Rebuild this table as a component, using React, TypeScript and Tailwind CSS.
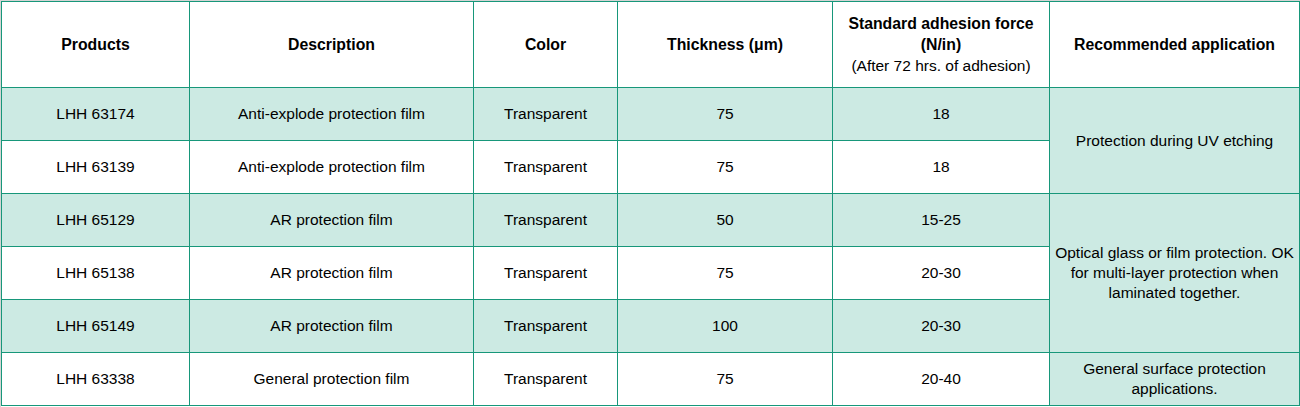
import React from 'react';

interface Row {
    product: string;
    description: string;
    color: string;
    thickness: string;
    adhesion: string;
    shaded: boolean;
}

const rows: Row[] = [
    { product: 'LHH 63174', description: 'Anti-explode protection film', color: 'Transparent', thickness: '75', adhesion: '18', shaded: true },
    { product: 'LHH 63139', description: 'Anti-explode protection film', color: 'Transparent', thickness: '75', adhesion: '18', shaded: false },
    { product: 'LHH 65129', description: 'AR protection film', color: 'Transparent', thickness: '50', adhesion: '15-25', shaded: true },
    { product: 'LHH 65138', description: 'AR protection film', color: 'Transparent', thickness: '75', adhesion: '20-30', shaded: false },
    { product: 'LHH 65149', description: 'AR protection film', color: 'Transparent', thickness: '100', adhesion: '20-30', shaded: true },
    { product: 'LHH 63338', description: 'General protection film', color: 'Transparent', thickness: '75', adhesion: '20-40', shaded: false },
];

// application column uses rowspans, keyed by the row it starts on
const applications: Record<number, { span: number; text: React.ReactNode }> = {
    0: { span: 2, text: 'Protection during UV etching' },
    2: {
        span: 3,
        text: (
            <>
                Optical glass or film protection. OK
                <br />
                for multi-layer protection when
                <br />
                laminated together.
            </>
        ),
    },
    5: {
        span: 1,
        text: (
            <>
                General surface protection
                <br />
                applications.
            </>
        ),
    },
};

const cell = 'border border-[#17977a] text-center align-middle px-[3px] leading-[20px]';
const head = 'border border-[#17977a] text-center align-middle px-[3px] font-bold text-[15.8px] leading-[21px]';

export default function App() {
    return (
        <div className="w-[1300px] h-[407px] bg-white border-l border-t border-[#d4d4d4] font-['Liberation_Sans',Arial,sans-serif] text-black text-[15.5px]">
            <table className="table-fixed border-collapse w-[1298px]">
                <colgroup>
                    <col className="w-[188px]" />
                    <col className="w-[284px]" />
                    <col className="w-[144px]" />
                    <col className="w-[215px]" />
                    <col className="w-[217px]" />
                    <col className="w-[250px]" />
                </colgroup>
                <thead>
                    <tr className="h-[86px]">
                        <th className={head}>Products</th>
                        <th className={head}>Description</th>
                        <th className={head}>Color</th>
                        <th className={head}>Thickness (μm)</th>
                        <th className={head}>
                            Standard adhesion force
                            <br />
                            (N/in)
                            <br />
                            <span className="font-normal text-[15.5px]">(After 72 hrs. of adhesion)</span>
                        </th>
                        <th className={head}>Recommended application</th>
                    </tr>
                </thead>
                <tbody>
                    {rows.map((r, i) => {
                        const bg = r.shaded ? 'bg-[#cceae3]' : 'bg-white';
                        const app = applications[i];
                        return (
                            <tr key={r.product} className="h-[53px]">
                                <td className={`${cell} ${bg}`}>{r.product}</td>
                                <td className={`${cell} ${bg}`}>{r.description}</td>
                                <td className={`${cell} ${bg}`}>{r.color}</td>
                                <td className={`${cell} ${bg}`}>{r.thickness}</td>
                                <td className={`${cell} ${bg}`}>{r.adhesion}</td>
                                {app && (
                                    <td rowSpan={app.span} className={`${cell} bg-[#cceae3]`}>
                                        {app.text}
                                    </td>
                                )}
                            </tr>
                        );
                    })}
                </tbody>
            </table>
        </div>
    );
}
